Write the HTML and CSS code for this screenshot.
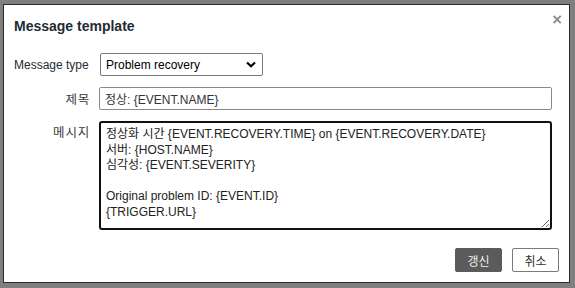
FILE: index.html
```html
<!DOCTYPE html>
<html lang="ko">

<head>
    <meta charset="UTF-8">
    <title>Message template</title>
    <link rel="stylesheet" href="styles.css">
</head>

<body>
    <div class="overlay">
        <div class="dialog">
            <div class="dialog-head">
                <h4>Message template</h4>
                <button type="button" class="btn-close" title="Close">&times;</button>
            </div>
            <form class="dialog-body">
                <div class="row">
                    <label class="row-label">Message type</label>
                    <div class="select">
                        <span>Problem recovery</span>
                        <svg width="10" height="7" viewBox="0 0 10 7"><path d="M1 1.5 L5 5.2 L9 1.5" fill="none" stroke="#000" stroke-width="2.2"/></svg>
                    </div>
                </div>
                <div class="row">
                    <label class="row-label right">제목</label>
                    <input type="text" class="text-input" value="정상: {EVENT.NAME}">
                </div>
                <div class="row top">
                    <label class="row-label right">메시지</label>
                    <textarea class="text-area" rows="6">정상화 시간 {EVENT.RECOVERY.TIME} on {EVENT.RECOVERY.DATE}
서버: {HOST.NAME}
심각성: {EVENT.SEVERITY}

Original problem ID: {EVENT.ID}
{TRIGGER.URL}</textarea>
                </div>
            </form>
            <div class="dialog-foot">
                <button type="button" class="btn primary">갱신</button>
                <button type="button" class="btn">취소</button>
            </div>
        </div>
    </div>
</body>

</html>
```

FILE: styles.css
```css
* {
    box-sizing: border-box;
}

body {
    margin: 0;
    height: 288px;
    background-color: #7f7f7f;
    font-family: "Liberation Sans", Arial, "Noto Sans CJK KR", sans-serif;
    font-size: 12px;
    color: #1f2c33;
    overflow: hidden;
}

.overlay {
    padding: 4px 5px 5px 3px;
}

.dialog {
    height: 279px;
    background-color: #fff;
    border: 1px solid #2b2b2b;
    display: flex;
    flex-direction: column;
}

.dialog-head {
    display: flex;
    justify-content: space-between;
    align-items: flex-start;
    padding: 12px 6px 0 10px;
}

.dialog-head h4 {
    margin: 0;
    font-size: 14px;
    font-weight: bold;
    color: #1f2c33;
    line-height: 18px;
}

.btn-close {
    border: none;
    background: none;
    padding: 0;
    margin-top: -7px;
    font-family: "DejaVu Sans", sans-serif;
    font-size: 14px;
    font-weight: bold;
    color: #8a8a8a;
    line-height: 18px;
    cursor: pointer;
}

.dialog-body {
    padding: 18px 17px 0 10px;
}

.row {
    display: flex;
    align-items: center;
    margin-bottom: 11px;
}

.row.top {
    align-items: flex-start;
}

.row-label {
    width: 86px;
    flex-shrink: 0;
    color: #1f2c33;
    white-space: nowrap;
}

.row-label.right {
    text-align: right;
    padding-right: 10px;
    font-family: "Noto Sans CJK KR", sans-serif;
    font-size: 12.5px;
    letter-spacing: 0.8px;
    color: #3a3a3a;
}

.row.top .row-label {
    padding-top: 1px;
}

.select {
    width: 163px;
    height: 23px;
    border: 1px solid #7a7a7a;
    border-radius: 2px;
    display: flex;
    align-items: center;
    justify-content: space-between;
    padding: 0 6px 0 5px;
    color: #000;
}

.text-input {
    flex: 1;
    height: 23px;
    margin-left: -1px;
    border: 1px solid #8a8a8a;
    border-radius: 2px;
    padding: 0 5px;
    font-family: "Liberation Sans", Arial, "Noto Sans CJK KR", sans-serif;
    font-size: 12px;
    color: #333;
}

.text-area {
    flex: 1;
    height: 109px;
    margin-left: -1px;
    border: 2px solid #111;
    border-radius: 3px;
    padding: 4px 5px 2px;
    font-family: "Liberation Sans", Arial, "Noto Sans CJK KR", sans-serif;
    font-size: 12px;
    line-height: 15.6px;
    color: #222;
    resize: vertical;
    outline: none;
}

.dialog-foot {
    margin-top: auto;
    display: flex;
    justify-content: flex-end;
    gap: 10px;
    padding: 0 10px 10px 0;
}

.btn {
    width: 47px;
    height: 24px;
    border: 1px solid #7a7a7a;
    border-radius: 2px;
    background-color: #fff;
    font-family: "Noto Sans CJK KR", sans-serif;
    font-size: 12px;
    color: #333;
    padding: 0;
    cursor: pointer;
}

.btn.primary {
    background-color: #5b5b5b;
    border-color: #5b5b5b;
    color: #eee;
}
```
